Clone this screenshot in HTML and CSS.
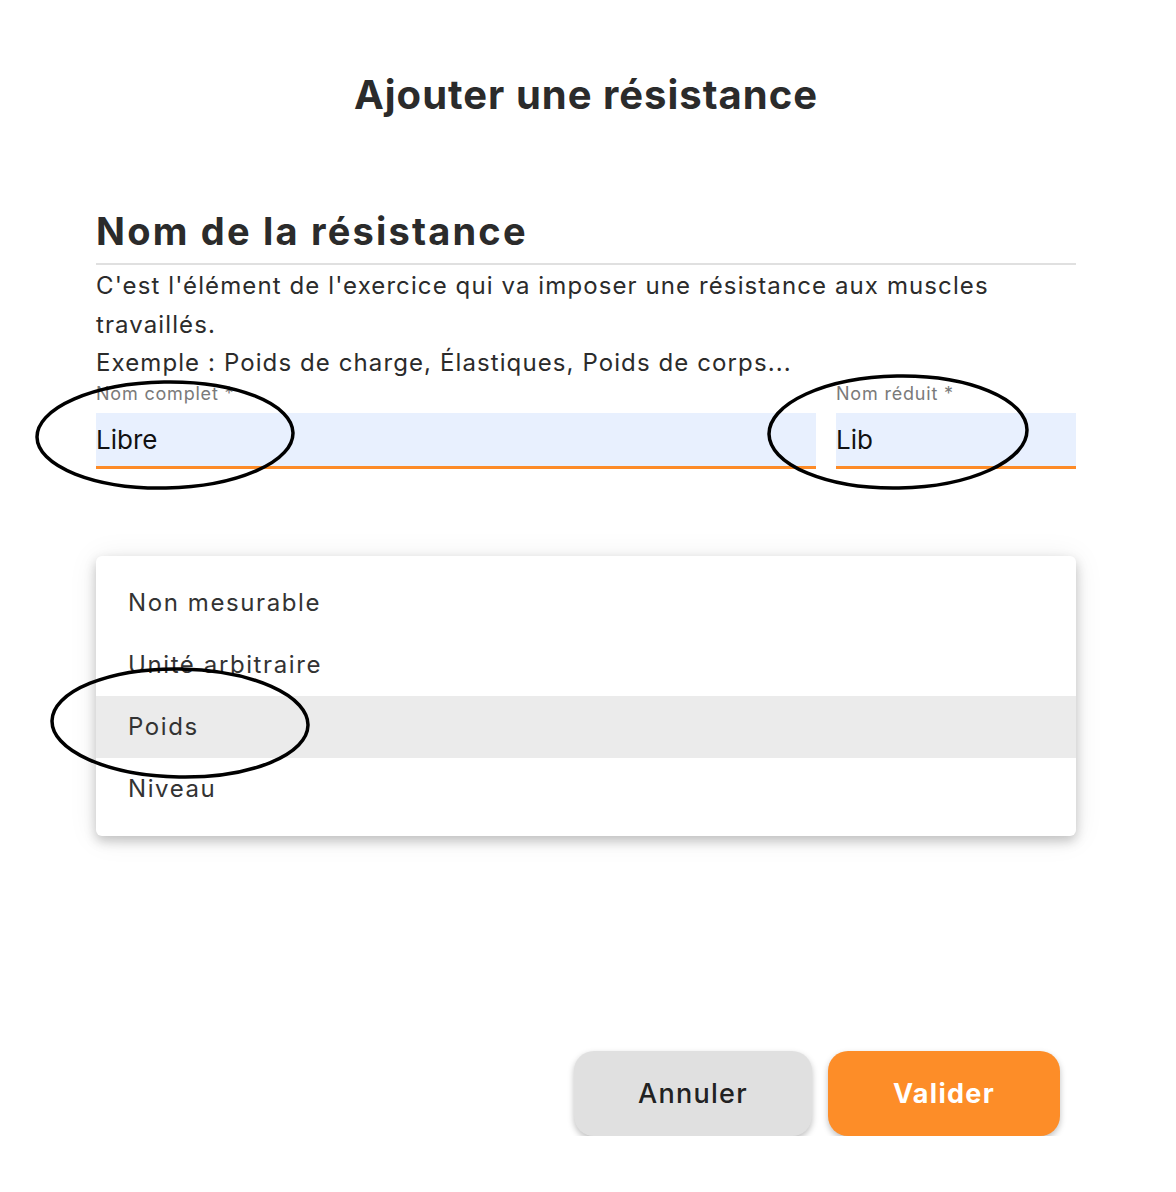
FILE: index.html
```html
<!DOCTYPE html>
<html lang="fr">
<head>
    <meta charset="UTF-8">
    <title>Ajouter une résistance</title>
<link rel="stylesheet" href="styles.css">
</head>
<body>

    <div class="dialog">
        <h1 class="dialogTitle">Ajouter une résistance</h1>

        <h2 class="sectionTitle">Nom de la résistance</h2>
        <p class="sectionText">
            C'est l'élément de l'exercice qui va imposer une résistance aux muscles travaillés.<br>
            Exemple : Poids de charge, Élastiques, Poids de corps...
        </p>

        <div class="fieldRow">
            <div class="field fieldLong">
                <label class="fieldLabel">Nom complet *</label>
                <div class="fieldInput">Libre</div>
            </div>
            <div class="field fieldShort">
                <label class="fieldLabel">Nom réduit *</label>
                <div class="fieldInput">Lib</div>
            </div>
        </div>

        <div class="menu">
            <div class="menuItem">Non mesurable</div>
            <div class="menuItem">Unité arbitraire</div>
            <div class="menuItem selected">Poids</div>
            <div class="menuItem">Niveau</div>
        </div>

        <div class="actions">
            <button class="btn btnCancel">Annuler</button>
            <button class="btn btnOk">Valider</button>
        </div>
    </div>

    <!-- annotations -->
    <svg class="marks" width="1176" height="1192" viewBox="0 0 1176 1192">
        <ellipse cx="165" cy="435" rx="128" ry="53" transform="rotate(-1 165 435)"/>
        <ellipse cx="898" cy="432" rx="129" ry="56" transform="rotate(-1 898 432)"/>
        <ellipse cx="180" cy="723" rx="128" ry="54" transform="rotate(1 180 723)"/>
    </svg>

</body>
</html>
```

FILE: styles.css
```css
body{
    margin: 0;
    background: #ffffff;
    font-family: Inter, "Noto Sans", sans-serif;
    color: #2b2b2b;
}
.dialog{
    width: 980px;
    margin-left: 96px;
    padding-top: 70px;
    display: flex;
    flex-direction: column;
}
.dialogTitle{
    margin: 0;
    text-align: center;
    font-size: 40px;
    line-height: 50px;
    letter-spacing: 1px;
    font-weight: 700;
    color: #2b2b2b;
}
.sectionTitle{
    margin: 88px 0 0 0;
    font-size: 38px;
    line-height: 46px;
    letter-spacing: 2.2px;
    font-weight: 700;
    padding-bottom: 9px;
    border-bottom: 2px solid #e0e0e0;
}
.sectionText{
    margin: 2px 0 0 0;
    font-size: 24px;
    line-height: 38.5px;
    letter-spacing: 1.1px;
    color: #2b2b2b;
}
.fieldRow{
    display: flex;
    gap: 20px;
    margin-top: 0;
}
.field{
    display: flex;
    flex-direction: column;
}
.fieldLong{
    flex: 1;
}
.fieldShort{
    width: 240px;
}
.fieldLabel{
    font-size: 18px;
    line-height: 22px;
    letter-spacing: 0.8px;
    color: #7a7a7a;
    margin-bottom: 8px;
}
.fieldInput{
    height: 53px;
    line-height: 53px;
    background: #e8f0fe;
    border-bottom: 3px solid #fd8b27;
    font-size: 26px;
    color: #111;
}
.menu{
    margin-top: 87px;
    padding: 16px 0;
    background: #fff;
    border-radius: 6px;
    box-shadow: 0 5px 12px rgba(0,0,0,0.22), 0 2px 30px rgba(0,0,0,0.08);
}
.menuItem{
    height: 62px;
    line-height: 62px;
    padding-left: 32px;
    font-size: 24px;
    letter-spacing: 1.6px;
    color: #333;
}
.menuItem.selected{
    background: #ebebeb;
}
.actions{
    margin-top: 215px;
    display: flex;
    justify-content: flex-end;
    gap: 16px;
    padding-right: 16px;
}
.btn{
    height: 85px;
    border: none;
    border-radius: 20px;
    font-family: Inter, "Noto Sans", sans-serif;
    font-size: 27px;
    letter-spacing: 1.3px;
    box-shadow: 0 3px 6px rgba(0,0,0,0.25);
}
.btnCancel{
    width: 238px;
    background: #e0e0e0;
    color: #222;
    font-weight: 500;
}
.btnOk{
    width: 232px;
    background: #fd8d28;
    color: #fff;
    font-weight: 700;
}
.marks{
    position: absolute;
    left: 0;
    top: 0;
    pointer-events: none;
}
.marks ellipse{
    fill: none;
    stroke: #000;
    stroke-width: 3.5;
}
```
